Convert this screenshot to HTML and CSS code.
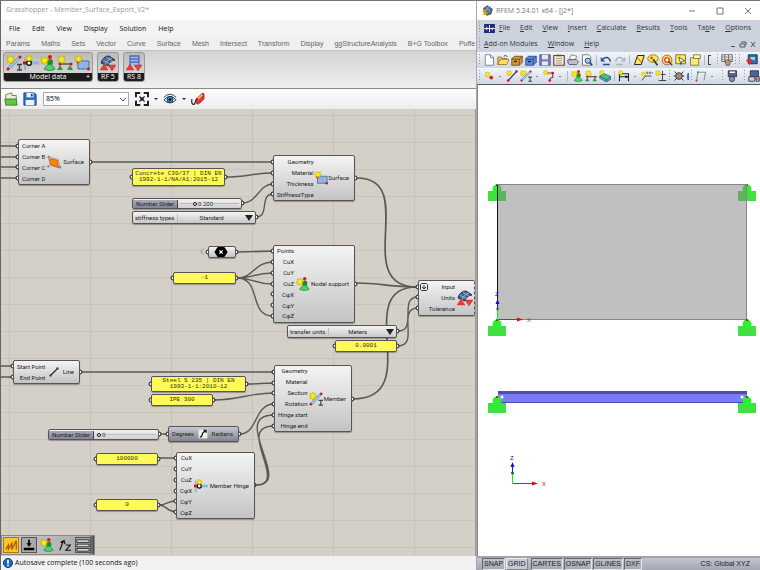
FILE: index.html
```
<!DOCTYPE html>
<html lang="en">
<head>
    <meta charset="UTF-8">
    <meta name="viewport" content="width=device-width, initial-scale=1.0">
    <title>Grasshopper - Member_Surface_Export_V2*</title>
    <link rel="stylesheet" href="styles.css">
</head>
<body>
    <!-- Shared icons -->
    <svg class="sprite" aria-hidden="true">
        <symbol id="star" viewBox="0 0 8 8"><path d="M4 0l.9 2L7 1 6 3.200 8 4 6 4.900 7 7 4.900 6 4 8 3.100 6 1 7 2 4.900 0 4 2 3.200 1 1 3.100 2z" fill="#ffee00" stroke="#b09500" stroke-width=".4"/></symbol>
        <symbol id="i-member" viewBox="0 0 16 16"><path d="M2 14L14 2" stroke="#6f9fd8" stroke-width="3"/><path d="M2 14L14 2" stroke="#d5e6f8" stroke-width="1"/><circle cx="2" cy="14" r="1.500" fill="#d11"/><circle cx="14" cy="2" r="1.500" fill="#d11"/><path d="M11 9.500h5M11 15h5M13.500 9.500V15" stroke="#444" stroke-width="1.400"/><use href="#star" width="9" height="9"/></symbol>
        <symbol id="i-hinge" viewBox="0 0 16 16"><path d="M1 8h15" stroke="#8fb5e6" stroke-width="3"/><path d="M2 2v13" stroke="#8fb5e6" stroke-width="2"/><circle cx="6" cy="8" r="2.300" fill="#fff" stroke="#111" stroke-width="1.400"/><rect y="6.500" width="3" height="3" fill="#e00"/><use href="#star" x="2" width="8" height="7"/></symbol>
        <symbol id="i-support" viewBox="0 0 16 16"><path d="M10 7l5 7-5 2-6-2z" fill="#4fd06a" stroke="#14742a" stroke-width=".7"/><circle cx="10" cy="7" r="3" fill="#1d8c35"/><circle cx="10" cy="2" r="2" fill="#e01818"/><use href="#star" y="1" width="9" height="9"/></symbol>
        <symbol id="i-line-support" viewBox="0 0 16 16"><path d="M2 9h13" stroke="#222" stroke-width="1.200"/><path d="M3 10l3 5H0zM13 10l3 5h-6z" fill="#2a9a40"/><circle cx="3" cy="9" r="1.500" fill="#d11"/><circle cx="14" cy="9" r="1.500" fill="#d11"/><use href="#star" width="9" height="9"/></symbol>
        <symbol id="i-surface" viewBox="0 0 16 16"><path d="M4 6h11v8H4z" fill="#8fb6e8" stroke="#4f6f9f"/><circle cx="4" cy="7" r="1.400" fill="#d11"/><circle cx="14.500" cy="14" r="1.500" fill="#d11"/><use href="#star" width="9" height="8"/></symbol>
        <symbol id="i-rf" viewBox="0 0 16 16"><path d="M1 8Q3 1 9 1l6 4Q10 5 8 11z" fill="#46678f" stroke="#1e3048"/><path d="M3 5l7 4M6 2l6 4M5 10Q6 5 12 3" stroke="#b6cbe6" stroke-width=".7" fill="none"/><path d="M0 15l4-6 4 6zM8 10h8l-4 6z" fill="#ee3a3a" stroke="#b22" stroke-width=".4"/></symbol>
        <symbol id="i-rs" viewBox="0 0 16 16"><path d="M4 10V1h9v9M4 4h9M4 7h9" fill="#a4bcea" stroke="#4c6cb4" stroke-width="1.300"/><path d="M0 15l4-6 4 6zM8 10h8l-4 6z" fill="#ee3a3a" stroke="#b22" stroke-width=".4"/></symbol>
        <symbol id="i-orange" viewBox="0 0 16 16"><path d="M1 2l12 3 2 10-11-3z" fill="none" stroke="#777" stroke-width=".6"/><path d="M3 4l9 2 1 8-9-3z" fill="#f80" stroke="#b84a00" stroke-width=".8"/><circle cx="2" cy="2" r="1.200" fill="#777"/><circle cx="1.500" cy="13" r="1.200" fill="#777"/><circle cx="15" cy="14" r="1.200" fill="#777"/></symbol>
        <symbol id="i-line" viewBox="0 0 16 16"><path d="M4 12L12 4" stroke="#222" stroke-width="1.300"/><circle cx="4" cy="12" r="1.500" fill="#555"/><circle cx="12" cy="4" r="1.500" fill="#555"/></symbol>
        <symbol id="i-folder" viewBox="0 0 16 16"><path d="M2 14V3l7-2v3h5v10z" fill="#e9f3df" stroke="#4d8c2b"/><path d="M1 8h13l1 7H2z" fill="#6cc043" stroke="#3c8420"/></symbol>
        <symbol id="i-save" viewBox="0 0 16 16"><path d="M1 1h12l2 2v12H1z" fill="#2f6fcd" stroke="#173f86"/><path d="M4 1h8v5H4zM3 9h10v6H3z" fill="#eef4fc"/><path d="M9 2h2v3H9z" fill="#173f86"/></symbol>
        <symbol id="i-new" viewBox="0 0 16 16"><path d="M3 1h7l4 4v10H3z" fill="#fff" stroke="#667"/><path d="M10 1v4h4" fill="none" stroke="#667"/></symbol>
        <symbol id="i-open" viewBox="0 0 16 16"><path d="M1 14V4h5l1 2h6v2" fill="#f0c650" stroke="#8c6a14"/><path d="M1 14l3-7h12l-3 7z" fill="#ffdd70" stroke="#8c6a14"/><path d="M9 3q3-3 5 1" fill="none" stroke="#246" stroke-width="1.300"/></symbol>
        <symbol id="i-box" viewBox="0 0 16 16"><path d="M1 6l4-3h10v8l-4 4H1z" fill="#d39a3a" stroke="#5e3d0b"/><path d="M1 7h10v8M11 7l4-4" fill="none" stroke="#5e3d0b"/><rect x="4" y="9" width="4" height="2" fill="#402800"/></symbol>
        <symbol id="i-bluebox" viewBox="0 0 16 16"><path d="M1 6l4-3h10v8l-4 4H1z" fill="#5a8be0" stroke="#1b356e"/><path d="M1 7h10v8M11 7l4-4" fill="none" stroke="#1b356e"/><rect x="4" y="9" width="4" height="2" fill="#10204a"/></symbol>
        <symbol id="i-disk" viewBox="0 0 16 16"><path d="M1 1h14v14H1z" fill="#7c7fb8" stroke="#4c4e80"/><path d="M4 1h8v6H4zM4 10h8v5H4z" fill="#e9e9f4"/></symbol>
        <symbol id="i-clip" viewBox="0 0 16 16"><path d="M1 2h14v13H1z" fill="#f3e8d4" stroke="#5a4b3b" stroke-width="1.500"/><path d="M4 6h8M4 9h8M4 12h8" stroke="#887"/><path d="M4 1h8v2H4z" fill="#5a4b3b"/></symbol>
        <symbol id="i-print" viewBox="0 0 16 16"><path d="M3 7l3-6 7 2-2 5z" fill="#fff" stroke="#567"/><path d="M1 8l11-1 3 3-2 4H3l-2-3z" fill="#b9bed0" stroke="#445"/><circle cx="12" cy="12" r="1.200" fill="#f6cf2c"/></symbol>
        <symbol id="i-preview" viewBox="0 0 16 16"><path d="M2 1h8l3 3v11H2z" fill="#fff" stroke="#556"/><circle cx="9" cy="9" r="3.500" fill="#a9cdf2" stroke="#246" stroke-width="1.300"/><path d="M11.500 11.500L15 15" stroke="#246" stroke-width="2"/></symbol>
        <symbol id="i-undo" viewBox="0 0 16 16"><path d="M3 7q8-6 11 3M4 14h9" fill="none" stroke="currentColor" stroke-width="2"/><path d="M1 4v6h6z" fill="currentColor"/></symbol>
        <symbol id="i-plane" viewBox="0 0 16 16"><path d="M6 2h9l-4 12H2z" fill="#ffe95c" stroke="#222" stroke-width="1.300"/><path d="M5 4l7 8" stroke="#d11"/></symbol>
        <symbol id="i-palette" viewBox="0 0 16 16"><ellipse cx="8" cy="6" rx="7" ry="5" fill="#ffe34d" stroke="#8a7000"/><circle cx="6" cy="5" r="1.500" fill="#d11"/><path d="M8 7l6 8" stroke="#333" stroke-width="2"/></symbol>
        <symbol id="i-target" viewBox="0 0 16 16"><circle cx="8" cy="8" r="6.500" fill="#ffdf3c" stroke="#a33"/><circle cx="8" cy="8" r="3" fill="#fff" stroke="#c22" stroke-width="1.500"/><path d="M10 10l5 5" stroke="#333" stroke-width="1.500"/></symbol>
        <symbol id="i-select" viewBox="0 0 16 16"><path d="M1 1h13v12H1z" fill="#ffe95c" stroke="#665500"/><path d="M5 4l8 5-4 1-1 4z" fill="#fff" stroke="#333"/></symbol>
        <symbol id="i-sheet" viewBox="0 0 16 16"><path d="M2 5h11v10H2z" fill="#f8e685" stroke="#776410"/><path d="M6 1h9v5H6z" fill="#fff7b8" stroke="#776410"/></symbol>
        <symbol id="i-table" viewBox="0 0 16 16"><path d="M1 1h14v9H1z" fill="#fff" stroke="#444"/><path d="M1 4h14M1 7h14M5 1v9M10 1v9" stroke="#555"/><path d="M5 9h8l-2 6H7z" fill="#c89a78" stroke="#543"/></symbol>
        <symbol id="i-cut" viewBox="0 0 16 16"><path d="M3 1h12v12H3z" fill="#2d6fa8" stroke="#123"/><path d="M6 4h6v4H6z" fill="#9cd2f4"/><path d="M0 8l3-1 2 1 2-1 2 1-4 7z" fill="#e02424"/></symbol>
        <symbol id="i-node" viewBox="0 0 16 16"><use href="#star" x="2" y="2" width="8" height="8"/><circle cx="11" cy="10" r="2.500" fill="#d82020"/></symbol>
        <symbol id="i-rline" viewBox="0 0 16 16"><path d="M3 14L14 2" stroke="#335" stroke-width="1.500"/><circle cx="3" cy="14" r="1.800" fill="#d11"/><circle cx="14" cy="2" r="1.800" fill="#d11"/><use href="#star" width="8" height="8"/></symbol>
        <symbol id="i-poly" viewBox="0 0 16 16"><path d="M3 4h10v6q-4 0-4 5" stroke="#933" fill="none" stroke-width="1.500"/><circle cx="13" cy="4" r="1.800" fill="#d11"/><circle cx="9" cy="14" r="1.800" fill="#d11"/><use href="#star" width="7" height="7"/></symbol>
        <symbol id="i-solid" viewBox="0 0 16 16"><path d="M1 8l6-3 9 4-6 4z" fill="#58c070" stroke="#176"/><path d="M1 8v3l9 5v-3zM10 13l6-4v3l-6 4z" fill="#59a5d8" stroke="#176"/><use href="#star" width="7" height="7"/></symbol>
        <symbol id="i-dim" viewBox="0 0 16 16"><path d="M2 15V5h12v10M2 9h12" fill="none" stroke="#222" stroke-width="1.500"/><path d="M14 9l-4-2v4z"/><use href="#star" width="7" height="7"/></symbol>
        <symbol id="i-text" viewBox="0 0 16 16"><path d="M1 14l5-6h8" fill="none" stroke="#444" stroke-width="1.300"/><path d="M8 4h2M11 4h2M14 4h2M8 2v3M12 2v3" stroke="#234"/><use href="#star" y="2" width="7" height="7"/></symbol>
        <symbol id="i-level" viewBox="0 0 16 16"><path d="M10 1v14M5 14h10M8 6h6" fill="none" stroke="#444" stroke-width="1.300"/><use href="#star" width="8" height="8"/></symbol>
        <symbol id="i-bug" viewBox="0 0 16 16"><path d="M2 2l12 12M14 2L2 14M1 8h14" stroke="#333" stroke-width="1.300"/><circle cx="8" cy="8" r="4.500" fill="#9b8a7a" stroke="#322"/></symbol>
        <symbol id="i-frame" viewBox="0 0 16 16"><path d="M2 14L4 3h10l-2 11" fill="none" stroke="#8a9a8f" stroke-width="1.500"/><circle cx="2" cy="14" r="1.500" fill="#c44"/><circle cx="4" cy="3" r="1.500" fill="#3a5"/></symbol>
        <symbol id="i-calc" viewBox="0 0 16 16"><path d="M3 1h11v8H3z" fill="#50639e" stroke="#223"/><path d="M5 3h7" stroke="#fff" stroke-width="2"/><circle cx="8" cy="12" r="3.500" fill="#8b8f9e" stroke="#334"/></symbol>
        <symbol id="i-calc2" viewBox="0 0 16 16"><path d="M3 1h11v8H3z" fill="#50639e" stroke="#223"/><path d="M1 9h8v6H1zM11 9h4v6h-4z" fill="#c7cede" stroke="#223"/><path d="M9 12h6" stroke="#d11"/></symbol>
        <symbol id="g-support" viewBox="0 0 18 17"><path d="M0 7h18v10H0z" fill="#40e040"/><circle cx="9" cy="5" r="4.500" fill="#2cf22c"/><circle cx="9" cy="1" r="1" fill="#8a1010"/></symbol>
    </svg>

    <div class="desktop">
        <main class="gh window">
            <header class="gh-title">Grasshopper - Member_Surface_Export_V2*</header>
            <nav class="gh-menu">
                <button>File</button><button>Edit</button><button>View</button><button>Display</button><button>Solution</button><button>Help</button>
            </nav>
            <nav class="gh-tabs">
                <button>Params</button><button>Maths</button><button>Sets</button><button>Vector</button><button>Curve</button><button>Surface</button><button>Mesh</button><button>Intersect</button><button>Transform</button><button>Display</button><button>ggStructureAnalysis</button><button>B+G Toolbox</button><button>Puffe</button>
            </nav>
            <section class="ribbon">
                <div class="group">
                    <div class="group-icons">
                        <button aria-label="Member"><svg><use href="#i-member"/></svg></button>
                        <button aria-label="Member hinge"><svg><use href="#i-hinge"/></svg></button>
                        <button aria-label="Nodal support"><svg><use href="#i-support"/></svg></button>
                        <button aria-label="Line support"><svg><use href="#i-line-support"/></svg></button>
                        <button aria-label="Surface"><svg><use href="#i-surface"/></svg></button>
                    </div>
                    <div class="group-label"><span>Model data</span><i>+</i></div>
                </div>
                <div class="group">
                    <div class="group-icons"><button aria-label="RFEM 5"><svg><use href="#i-rf"/></svg></button></div>
                    <div class="group-label"><span>RF 5</span></div>
                </div>
                <div class="group">
                    <div class="group-icons"><button aria-label="RSTAB 8"><svg><use href="#i-rs"/></svg></button></div>
                    <div class="group-label"><span>RS 8</span></div>
                </div>
            </section>
            <section class="gh-tools">
                <button aria-label="Open"><svg><use href="#i-folder"/></svg></button>
                <button aria-label="Save"><svg><use href="#i-save"/></svg></button>
                <select class="zoom" aria-label="Zoom"><option>85%</option></select>
                <button aria-label="Zoom extents"><svg viewBox="0 0 16 16"><path d="M1 6V1h5M10 1h5v5M15 10v5h-5M6 15H1v-5" fill="none" stroke="#222" stroke-width="2.500"/><path d="M5 5l6 6M11 5l-6 6" stroke="#222" stroke-width="1.500"/><circle cx="8" cy="8" r="2" fill="#222"/></svg></button>
                <i class="drop"></i>
                <button aria-label="Preview"><svg viewBox="0 0 16 16"><path d="M1 9Q8 1 15 9Q8 16 1 9z" fill="#eaf6ff" stroke="#223344"/><circle cx="8" cy="8.500" r="3.500" fill="#2d9fe0" stroke="#124"/><circle cx="8" cy="8.500" r="1.500"/><path d="M1 6Q8-1 15 6" fill="none" stroke="#234"/></svg></button>
                <i class="drop"></i>
                <button aria-label="Sketch"><svg viewBox="0 0 16 16"><path d="M5 12q1-5 8-11l2 1v6q-4 5-8 6z" fill="#e33a2c" stroke="#801010" stroke-width=".6"/><path d="M8 8l5-5" stroke="#ffb080" stroke-width="2"/><path d="M1 8q-1 7 3 6 1-5 3-7" fill="none" stroke="#222" stroke-width="1.300"/></svg></button>
            </section>

            <section class="canvas">
                <svg class="wires" aria-hidden="true">
                    <g transform="translate(0 -109)">
                        <g class="wire">
                            <path d="M0 146H18M0 157H18M0 167H18M0 178H18M0 366H13M0 377H13"/>
                            <path d="M226 177C246 177 254 173 273 173"/>
                            <path d="M243 203C257 203 259 184 273 184"/>
                            <path d="M256 217C270 217 259 194 273 194"/>
                            <path d="M357 178C420 178 350 287 417 287" class="thick"/>
                            <path d="M238 252L273 251" class="thick"/>
                            <path d="M237 278C254 278 254 262 273 262M237 278C254 278 254 273 273 273M237 278C254 278 254 284 273 284M237 278C262 278 248 316 273 316"/>
                            <path d="M357 283C380 283 390 287 417 287" class="thick"/>
                            <path d="M398 331C418 331 398 297 418 297M398 346C420 346 396 308 418 308"/>
                            <path d="M353 399C426 399 350 287 417 287" class="thick"/>
                            <path d="M91 162H273M81 372H274" class="thick"/>
                            <path d="M247 384C258 384 263 383 274 383M214 400C240 400 248 393 274 393M161 434H168"/>
                            <path d="M240 434C258 434 254 404 274 404"/>
                            <path d="M256 485C295 485 228 415 274 415M256 485C290 485 234 426 274 426"/>
                            <path d="M159 458H176M159 505C166 505 168 501 176 501M159 505C166 505 168 512 176 512"/>
                        </g>
                        <path class="wireless" d="M202 249q-3 2.500 0 5M204 248q-4 3.500 0 7"/>
                        <g class="ports">
                            <circle cx="18" cy="146" r="2"/><circle cx="18" cy="157" r="2"/><circle cx="18" cy="167" r="2"/><circle cx="18" cy="178" r="2"/><circle cx="90" cy="162" r="2"/>
                            <circle cx="132" cy="177" r="2"/><circle cx="225" cy="177" r="2"/><circle cx="242" cy="203" r="2"/><circle cx="256" cy="217" r="2"/>
                            <circle cx="273" cy="162" r="2"/><circle cx="273" cy="173" r="2"/><circle cx="273" cy="184" r="2"/><circle cx="273" cy="194" r="2"/><circle cx="355" cy="178" r="2"/>
                            <circle cx="208" cy="252" r="2"/><circle cx="236" cy="252" r="2"/><circle cx="173" cy="278" r="2"/><circle cx="236" cy="278" r="2"/>
                            <circle cx="273" cy="251" r="2"/><circle cx="273" cy="262" r="2"/><circle cx="273" cy="273" r="2"/><circle cx="273" cy="284" r="2"/><circle cx="273" cy="294" r="2"/><circle cx="273" cy="305" r="2"/><circle cx="273" cy="316" r="2"/><circle cx="355" cy="284" r="2"/>
                            <circle cx="418" cy="287" r="2"/><circle cx="418" cy="297" r="2"/><circle cx="418" cy="308" r="2"/>
                            <circle cx="397" cy="331" r="2"/><circle cx="335" cy="346" r="2"/><circle cx="397" cy="346" r="2"/>
                            <circle cx="13" cy="366" r="2"/><circle cx="13" cy="377" r="2"/><circle cx="80" cy="372" r="2"/>
                            <circle cx="151" cy="384" r="2"/><circle cx="246" cy="384" r="2"/><circle cx="151" cy="400" r="2"/><circle cx="213" cy="400" r="2"/>
                            <circle cx="274" cy="372" r="2"/><circle cx="274" cy="383" r="2"/><circle cx="274" cy="393" r="2"/><circle cx="274" cy="404" r="2"/><circle cx="274" cy="415" r="2"/><circle cx="274" cy="426" r="2"/><circle cx="352" cy="399" r="2"/>
                            <circle cx="159" cy="434" r="2"/><circle cx="168" cy="434" r="2"/><circle cx="239" cy="434" r="2"/>
                            <circle cx="96" cy="459" r="2"/><circle cx="158" cy="459" r="2"/><circle cx="96" cy="505" r="2"/><circle cx="158" cy="505" r="2"/>
                            <circle cx="176" cy="458" r="2"/><circle cx="176" cy="469" r="2"/><circle cx="176" cy="480" r="2"/><circle cx="176" cy="491" r="2"/><circle cx="176" cy="501" r="2"/><circle cx="176" cy="512" r="2"/><circle cx="254" cy="485" r="2"/>
                        </g>
                    </g>
                </svg>

                <div class="node n-corners"><ul><li>Corner A</li><li>Corner B</li><li>Corner C</li><li>Corner D</li></ul><svg><use href="#i-orange"/></svg><b>Surface</b></div>
                <div class="panel p-concrete">Concrete C30/37 | DIN EN 1992-1-1/NA/A1:2015-12</div>
                <div class="slider s-thickness"><label for="thickness">Number Slider</label><div class="track"><input id="thickness" type="range" min="0" max="100" value="23"><output>0.200</output></div></div>
                <div class="list l-stiffness"><label for="stiffness">stiffness types</label><select id="stiffness"><option>Standard</option></select></div>
                <div class="node n-surface"><ul><li>Geometry</li><li>Material</li><li>Thickness</li><li>StiffnessType</li></ul><svg><use href="#i-surface"/></svg><b>Surface</b></div>
                <div class="node n-point"><svg viewBox="0 0 16 12"><path d="M4 0h8l4 6-4 6H4L0 6z"/><path d="M6 4l4 4M10 4L6 8" stroke="#fff" stroke-width="1.500"/></svg></div>
                <div class="node n-nodal"><ul><li>Points</li><li>CuX</li><li>CuY</li><li>CuZ</li><li>CφX</li><li>CφY</li><li>CφZ</li></ul><svg><use href="#i-support"/></svg><b>Nodal support</b></div>
                <div class="panel p-minus">-1</div>
                <div class="node n-export"><svg class="flatten" viewBox="0 0 8 8"><path d="M1.500.5h5l1 1v5l-1 1h-5l-1-1v-5zM4 2v4M2 4l2 2 2-2" fill="none" stroke="#333"/></svg><ul><li>Input</li><li>Units</li><li>Tolerance</li></ul><svg><use href="#i-rf"/></svg></div>
                <div class="list l-units"><label for="units">transfer units</label><select id="units"><option>Meters</option></select></div>
                <div class="panel p-tolerance">0.0001</div>
                <div class="node n-line"><ul><li>Start Point</li><li>End Point</li></ul><svg><use href="#i-line"/></svg><b>Line</b></div>
                <div class="panel p-steel">Steel S 235 | DIN EN 1993-1-1:2010-12</div>
                <div class="panel p-ipe">IPE 300</div>
                <div class="node n-member"><ul><li>Geometry</li><li>Material</li><li>Section</li><li>Rotation</li><li>Hinge start</li><li>Hinge end</li></ul><svg><use href="#i-member"/></svg><b>Member</b></div>
                <div class="slider s-angle"><label for="angle">Number Slider</label><div class="track"><input id="angle" type="range" min="0" max="100" value="2"><output>0</output></div></div>
                <div class="node n-radians"><b>Degrees</b><svg viewBox="0 0 16 16"><path d="M1 1h14v14H1z" fill="#eee"/><path d="M3 13c5 0 3-6 5-7s2-2 4-3M9 2h4v4" fill="none" stroke="#111" stroke-width="2"/></svg><b>Radians</b></div>
                <div class="panel p-hundred">100000</div>
                <div class="panel p-zero">0</div>
                <div class="node n-hinge"><ul><li>CuX</li><li>CuY</li><li>CuZ</li><li>CφX</li><li>CφY</li><li>CφZ</li></ul><svg><use href="#i-hinge"/></svg><b>Member Hinge</b></div>

                <div class="widgets">
                    <button class="active" aria-label="Profiler"><svg viewBox="0 0 16 16"><path d="M2 13l3-5v5l4-7v7l5-10v10" fill="none" stroke="#b05a00" stroke-width="1.500"/></svg></button>
                    <button class="pressed" aria-label="Align"><svg viewBox="0 0 16 16"><path d="M2 11h12v3H2zM5 6h6l-3 4zM7 2h2v5H7z"/></svg></button>
                    <button aria-label="Support"><svg><use href="#i-support"/></svg></button>
                    <button aria-label="Sort"><svg viewBox="0 0 16 16"><path d="M2 14L6 4M3 5l4-2 1 4M9 8h5l-5 6h6" fill="none" stroke="#111" stroke-width="1.300"/></svg></button>
                    <button class="pressed" aria-label="Rows"><svg viewBox="0 0 16 16"><path d="M1 2h14v3H1zM1 7h14v3H1zM1 12h14v3H1z" fill="#ddd" stroke="#222"/></svg></button>
                </div>
            </section>
            <footer class="gh-status"><svg viewBox="0 0 12 12"><circle cx="6" cy="6" r="5.500" fill="#1a62c4" stroke="#0c2f6c"/><path d="M6 2v5M6 8v2" stroke="#fff" stroke-width="2"/></svg>Autosave complete (100 seconds ago)</footer>
        </main>

        <aside class="rf window">
            <header class="rf-title">
                <svg class="app" viewBox="0 0 16 16"><path d="M2 5l6-4 7 5-2 7-6 2z" fill="#5374a4" stroke="#223"/><path d="M6 3l6 6M10 2L5 10" stroke="#abc"/><path d="M6 8q-4-1-4 1t4 2-4 3" stroke="#caa30c" stroke-width="2" fill="none"/></svg>
                <span>RFEM 5.24.01 x64 - [j2*]</span>
                <button aria-label="Minimize"><svg viewBox="0 0 8 8"><path d="M1 4h6"/></svg></button>
                <button aria-label="Maximize"><svg viewBox="0 0 8 8"><path d="M1 1h6v6H1z"/></svg></button>
                <button aria-label="Close"><svg viewBox="0 0 8 8"><path d="M1 1l6 6M7 1L1 7"/></svg></button>
            </header>
            <nav class="rf-menu">
                <div class="menu-row">
                    <i class="grip"></i>
                    <svg class="logo" viewBox="0 0 12 10"><path d="M0 0h12v10H0z" fill="#1c2c78"/><path d="M0 5h12M6 1v8M3 3v4M9 4v3" stroke="#fff"/></svg>
                    <button><u>F</u>ile</button><button><u>E</u>dit</button><button><u>V</u>iew</button><button><u>I</u>nsert</button><button><u>C</u>alculate</button><button><u>R</u>esults</button><button><u>T</u>ools</button><button>Ta<u>b</u>le</button><button><u>O</u>ptions</button>
                </div>
                <div class="menu-row">
                    <i class="grip"></i>
                    <button><u>A</u>dd-on Modules</button><button><u>W</u>indow</button><button><u>H</u>elp</button>
                    <svg class="mdi" viewBox="0 0 28 8"><path d="M1 6.500h4M10 4h5v3h-5zM11 2h5v3M21 2l4 5M25 2l-4 5" fill="none" stroke="#555"/></svg>
                </div>
            </nav>
            <div class="rf-tools">
                <i class="grip"></i>
                <button aria-label="New"><svg><use href="#i-new"/></svg></button>
                <button aria-label="Open"><svg><use href="#i-open"/></svg></button>
                <button aria-label="Project"><svg><use href="#i-box"/></svg></button>
                <button aria-label="Block"><svg><use href="#i-bluebox"/></svg></button>
                <button aria-label="Save"><svg><use href="#i-disk"/></svg></button>
                <button aria-label="Clipboard"><svg><use href="#i-clip"/></svg></button>
                <button aria-label="Print"><svg><use href="#i-print"/></svg></button>
                <button aria-label="Preview"><svg><use href="#i-preview"/></svg></button>
                <i class="rule"></i>
                <button class="undo" aria-label="Undo"><svg><use href="#i-undo"/></svg></button>
                <button class="redo" aria-label="Redo"><svg><use href="#i-undo"/></svg></button>
                <i class="rule"></i>
                <button aria-label="Work plane"><svg><use href="#i-plane"/></svg></button>
                <button aria-label="Colors"><svg><use href="#i-palette"/></svg></button>
                <button aria-label="Target"><svg><use href="#i-target"/></svg></button>
                <button aria-label="Select"><svg><use href="#i-select"/></svg></button>
                <button aria-label="Sheets"><svg><use href="#i-sheet"/></svg></button>
                <i class="rule"></i>
                <i class="cut"></i>
                <i class="grip start"></i>
                <button aria-label="Tables"><svg><use href="#i-table"/></svg></button>
                <i class="grip"></i>
                <i class="grip"></i>
                <button class="push" aria-label="Sections"><svg><use href="#i-cut"/></svg></button>
            </div>
            <div class="rf-tools">
                <i class="grip"></i>
                <button aria-label="Node"><svg><use href="#i-node"/></svg></button>
                <i class="drop"></i>
                <button aria-label="Line"><svg><use href="#i-rline"/></svg></button>
                <button aria-label="Member"><svg><use href="#i-member"/></svg></button>
                <i class="drop"></i>
                <button aria-label="Polyline"><svg><use href="#i-poly"/></svg></button>
                <i class="drop"></i>
                <i class="rule"></i>
                <button aria-label="Nodal support"><svg><use href="#i-support"/></svg></button>
                <button aria-label="Line support"><svg><use href="#i-line-support"/></svg></button>
                <button aria-label="Solid"><svg><use href="#i-solid"/></svg></button>
                <i class="rule"></i>
                <button aria-label="Dimension"><svg><use href="#i-dim"/></svg></button>
                <i class="drop"></i>
                <button aria-label="Comment"><svg><use href="#i-text"/></svg></button>
                <button aria-label="Level"><svg><use href="#i-level"/></svg></button>
                <i class="grip"></i>
                <button aria-label="Check"><svg><use href="#i-bug"/></svg></button>
                <i class="arc"></i>
                <i class="grip"></i>
                <button aria-label="Frame"><svg><use href="#i-frame"/></svg></button>
                <i class="drop"></i>
                <i class="grip start"></i>
                <button aria-label="Calculate"><svg><use href="#i-calc"/></svg></button>
                <i class="grip start"></i>
                <button class="push" aria-label="Results"><svg><use href="#i-calc2"/></svg></button>
            </div>
            <section class="view">
                <svg role="img" aria-label="Model with a surface and a member">
                    <g transform="translate(-478 -85)">
                        <use href="#g-support" x="488" y="184" width="18" height="17"/>
                        <use href="#g-support" x="738" y="184" width="18" height="17"/>
                        <path d="M497 185H747V320H497z" fill="#828282" fill-opacity=".5"/>
                        <path d="M497 184.500H747M746.500 185V320M497 319.500H747" stroke="#858585" fill="none"/>
                        <use href="#g-support" x="488" y="319" width="18" height="17"/>
                        <use href="#g-support" x="738" y="319" width="18" height="17"/>
                        <path d="M497.500 185V320" stroke="#111"/>
                        <path d="M498 391H747V403H498z" fill="#7b7bf6"/>
                        <path d="M498 391H747V394H498zM498 402H747V403H498z" fill="#4c4cb4"/>
                        <use href="#g-support" x="488" y="396" width="18" height="17"/>
                        <use href="#g-support" x="738" y="396" width="18" height="17"/>
                        <circle cx="502" cy="397" r="1.500" fill="#fff"/><circle cx="742" cy="397" r="1.500" fill="#fff"/>
                        <path d="M497.500 320V308M512.500 484V473" stroke="#1cf01c"/>
                        <path d="M497.500 309V298M512.500 473V464" stroke="#11f"/>
                        <path d="M497.500 299l2 5h-4zM512.500 462l2 5h-4z" fill="#1212b8"/>
                        <circle cx="512.500" cy="473" r="1.500" fill="#0a6a30"/><circle cx="497.500" cy="309" r="1.200" fill="#0a6a30"/>
                        <path d="M498 319.500H520M513 483.500H535" stroke="#f01010"/>
                        <path d="M523 319.500l-6-2v4zM538 483.500l-6-2v4z" fill="#d01010"/>
                        <text x="495" y="296" class="axis-z">Z</text><text x="527" y="322" class="axis-x">X</text>
                        <text x="510" y="460" class="axis-z">Z</text><text x="542" y="486" class="axis-x">X</text>
                    </g>
                </svg>
            </section>
            <footer class="rf-status">
                <button>SNAP</button><button class="on">GRID</button><button>CARTES</button><button>OSNAP</button><button>GLINES</button><button>DXF</button>
                <span>CS: Global XYZ</span>
            </footer>
        </aside>
    </div>
</body>
</html>
```
FILE: styles.css
```
* { margin: 0; padding: 0; box-sizing: border-box; }
body {
    font-family: "Open Sans", sans-serif;
    font-size: 7px;
    line-height: 10px;
    color: #222;
    background: #d4d0c8;
}
button {
    font: inherit;
    color: inherit;
    background: none;
    border: 0;
    white-space: nowrap;
}
svg { display: block; flex: none; }
.sprite { position: absolute; width: 0; height: 0; }
.desktop {
    display: grid;
    grid-template-columns: 476fr 284fr;
    height: 100vh;
    border-top: 1px solid #777;
}
.window {
    display: flex;
    flex-direction: column;
    min-width: 0;
    overflow: hidden;
}

/* Grasshopper */
.gh { position: relative; }
.gh::before {
    content: "";
    position: absolute;
    z-index: 2;
    inset: 0 auto 0 0;
    width: 1px;
    background: #666;
}
.gh-title {
    height: 19px;
    padding: 4px 6px;
    background: #fff;
    color: #999;
}
.gh-menu {
    display: flex;
    align-items: center;
    gap: 12px;
    height: 17px;
    padding: 0 9px;
    background: #f3f3f3;
    color: #111;
}
.gh-tabs {
    display: flex;
    align-items: center;
    gap: 11px;
    height: 14px;
    padding: 0 0 0 6px;
    overflow: hidden;
    background: #efefef;
    border-bottom: 1px solid #c4c4c4;
    color: #666;
    font-family: "Liberation Sans", sans-serif;
}
.ribbon {
    display: flex;
    align-items: flex-start;
    gap: 4px;
    height: 38px;
    padding: 1px 3px;
    background: linear-gradient(#d2d2d2, #f0f0f0);
    border-bottom: 1px solid #888;
}
.group {
    border: 1px solid #999;
    border-radius: 3px;
    background: linear-gradient(#bbb, #dcdcdc);
    overflow: hidden;
}
.group-icons { display: flex; gap: 1px; padding: 2px; }
.group-icons svg { width: 16px; height: 16px; }
.group-label {
    display: flex;
    justify-content: center;
    position: relative;
    line-height: 8px;
    background: #1c1c1c;
    color: #fff;
}
.group-label i {
    position: absolute;
    right: 2px;
    font-style: normal;
}
.gh-tools {
    display: flex;
    align-items: center;
    gap: 5px;
    height: 20px;
    padding: 0 4px;
    background: linear-gradient(#fdfdfd, #ededed);
}
.gh-tools svg { width: 14px; height: 14px; }
.zoom {
    width: 86px;
    height: 14px;
    padding: 0 2px;
    margin: 0 1px;
    appearance: none;
    border: 1px solid #aaa;
    font: inherit;
    background:
        linear-gradient(45deg, transparent 45%, #555 45%, #555 60%, transparent 60%) right 5px center / 3px 3px no-repeat,
        linear-gradient(-45deg, transparent 45%, #555 45%, #555 60%, transparent 60%) right 2px center / 3px 3px no-repeat,
        #fff;
}
.drop {
    flex: none;
    border: 2px solid transparent;
    border-top-color: #222;
    border-bottom: 0;
}

/* Canvas */
.canvas {
    position: relative;
    flex: 1;
    overflow: hidden;
    background:
        linear-gradient(to right, #c6c3ba 1px, transparent 1px) 9px 6px / 81px 27px,
        linear-gradient(#c8c5bc 1px, transparent 1px) 9px 6px / 81px 27px,
        #d4d0c8;
    border-right: 1px solid #999;
    font-family: Roboto, sans-serif;
    font-size: 6px;
    line-height: 8px;
}
.wires {
    position: absolute;
    inset: 0;
    width: 100%;
    height: 100%;
}
.wire { fill: none; stroke: #5a5a54; stroke-width: 1.4; }
.wire .thick { stroke-width: 1.7; }
.wireless { fill: none; stroke: #aaa; }
.ports { fill: #fff; stroke: #111; }
.node, .panel, .slider, .list {
    position: absolute;
    display: flex;
    align-items: center;
    border: 1px solid #555;
    border-radius: 2px;
    box-shadow: 0 1px 1px rgba(0,0,0,0.3);
    white-space: nowrap;
}
.node {
    justify-content: space-between;
    padding: 0 5px 0 3px;
    background: linear-gradient(#f4f4f4, #c4c4c4);
}
.node ul {
    display: flex;
    flex-direction: column;
    justify-content: space-around;
    height: 100%;
    list-style: none;
    text-align: right;
}
.node b { font-weight: normal; }
.node svg { width: 14px; height: 14px; }
.n-corners { left: 18px; top: 30px; width: 72px; height: 46px; }
.n-surface { left: 273px; top: 46px; width: 82px; height: 46px; }
.n-point { left: 208px; top: 137px; width: 28px; height: 12px; justify-content: center; }
.n-point svg { height: 10px; }
.n-nodal { left: 273px; top: 136px; width: 82px; height: 78px; }
.n-export { left: 418px; top: 171px; width: 57px; height: 36px; padding: 0 1px; border-right: 1px dashed #555; }
.n-export ul { flex: 1; padding-right: 2px; }
.n-export svg { width: 16px; height: 16px; }
.n-export .flatten { align-self: flex-start; width: 8px; height: 8px; margin-top: 2px; }
.n-line { left: 13px; top: 251px; width: 67px; height: 24px; }
.n-member { left: 274px; top: 256px; width: 78px; height: 67px; }
.n-radians { left: 168px; top: 317px; width: 71px; height: 16px; background: linear-gradient(#c8c8d2, #84848f); }
.n-radians svg { width: 10px; height: 10px; }
.n-hinge { left: 176px; top: 343px; width: 79px; height: 67px; }
.panel {
    justify-content: center;
    background: #fffa5a;
    color: #333300;
    font-family: "Liberation Mono", monospace;
    line-height: 6px;
    text-align: center;
    white-space: normal;
}
.p-concrete { left: 132px; top: 59px; width: 93px; height: 18px; }
.p-minus { left: 173px; top: 163px; width: 63px; height: 12px; }
.p-tolerance { left: 335px; top: 231px; width: 62px; height: 12px; }
.p-steel { left: 151px; top: 267px; width: 95px; height: 16px; padding: 0 6px; }
.p-ipe { left: 151px; top: 285px; width: 62px; height: 12px; }
.p-hundred { left: 96px; top: 344px; width: 62px; height: 12px; }
.p-zero { left: 96px; top: 390px; width: 62px; height: 12px; }
.slider { background: linear-gradient(#f2f2f2, #cfcfcf); }
.slider label {
    width: 45px;
    background: linear-gradient(#a9a9b8, #85859a);
    border-right: 1px solid #444;
    text-align: center;
}
.track {
    display: flex;
    align-items: center;
    position: relative;
    flex: 1;
    padding: 0 2px;
}
.track input {
    width: 100%;
    height: 6px;
    appearance: none;
    background: linear-gradient(#bbb, #bbb) center / 100% 1px no-repeat;
}
.track input::-webkit-slider-thumb {
    appearance: none;
    width: 4px;
    height: 4px;
    border: 1px solid #111;
    border-radius: 50%;
    background: #fff;
}
.track output { position: absolute; left: 20px; background: #e2e2e2; line-height: 6px; }
.s-thickness { left: 132px; top: 89px; width: 110px; height: 11px; }
.s-angle { left: 48px; top: 320px; width: 111px; height: 11px; }
.s-angle output { left: 8px; }
.list { background: linear-gradient(#f4f4f4, #c8c8c8); }
.list label { padding: 0 3px 0 2px; border-right: 1px solid #bbb; }
.list select {
    flex: 1;
    appearance: none;
    border: 0;
    background: none;
    color: inherit;
    font: inherit;
    text-align: center;
    text-align-last: center;
}
.list::after {
    content: "";
    margin-right: 2px;
    border: 4px solid transparent;
    border-top: 6px solid #222;
    border-bottom: 0;
}
.l-stiffness { left: 132px; top: 102px; width: 124px; height: 13px; }
.l-units { left: 287px; top: 216px; width: 110px; height: 13px; }
.widgets {
    display: flex;
    align-items: center;
    gap: 2px;
    position: absolute;
    left: 1px;
    bottom: 1px;
    padding: 1px 3px 1px 1px;
    background: linear-gradient(to right, #ccc, #aaa 94%, #444);
    border: 1px solid #888;
}
.widgets svg { width: 14px; height: 14px; }
.widgets button { border: 1px solid transparent; }
.widgets .pressed { border-color: #555; background: #aaa; }
.widgets .active { border-color: #b07800; background: #ffc42c; }
.gh-status {
    display: flex;
    align-items: center;
    gap: 2px;
    height: 14px;
    padding: 0 3px;
    background: #f1f1f1;
    color: #111;
}
.gh-status svg { width: 10px; height: 10px; }

/* RFEM */
.rf {
    border-left: 1px solid #aaa;
    background: #cdd3de;
}
.rf-title {
    display: flex;
    align-items: center;
    gap: 3px;
    height: 19px;
    padding: 0 8px 0 5px;
    background: #fff;
    color: #777;
}
.rf-title .app { width: 11px; height: 11px; }
.rf-title span { flex: 1; }
.rf-title button { margin-left: 17px; }
.rf-title button svg { width: 8px; height: 8px; fill: none; stroke: #777; }
.menu-row {
    display: flex;
    align-items: center;
    gap: 10px;
    height: 16px;
    padding: 0 2px;
    color: #333;
}
.menu-row .grip { margin-right: -7px; }
.logo { width: 11px; height: 9px; margin-right: -6px; }
.mdi { width: 28px; height: 8px; margin-left: auto; }
.grip {
    flex: none;
    width: 2px;
    height: 12px;
    background: repeating-linear-gradient(#8d96a8 0 1px, transparent 1px 3px) left / 1px 100% no-repeat;
}
.rf-tools {
    display: flex;
    align-items: center;
    gap: 2px;
    height: 16px;
    padding: 0 2px;
    background: linear-gradient(#f3f6fb, #d0d7e4);
    overflow: hidden;
}
.rf-tools svg { width: 12px; height: 12px; }
.rf-tools .drop { border-width: 1px; margin: 0 3px 0 2px; }
.undo { color: #23508c; }
.redo { color: #a9b4c4; transform: scaleX(-1); }
.rule {
    flex: none;
    width: 1px;
    height: 10px;
    margin: 0 1px;
    background: #b3bbc9;
}
.cut {
    width: 3px;
    height: 10px;
    border: 1px solid #444;
    border-right: 0;
}
.start { margin-left: 4px; }
.push { margin-left: auto; }
.arc {
    width: 3px;
    height: 7px;
    border-left: 2px solid #3c68c8;
    border-radius: 50% 0 0 50%;
}
.view {
    flex: 1;
    min-height: 0;
    background: #fff;
    border-top: 1px solid #555;
    border-left: 1px solid #888;
}
.view svg { width: 100%; height: 100%; }
.view text { font-family: "Liberation Sans", sans-serif; font-size: 6px; }
.axis-x { fill: #e01010; }
.axis-z { fill: #1010e0; }
.rf-status {
    display: flex;
    align-items: center;
    gap: 1px;
    height: 14px;
    padding: 0 10px 0 5px;
    border-top: 2px solid #a0a4ac;
    background: linear-gradient(#c2c6cf, #a2a7b3);
    font-family: "Liberation Sans", sans-serif;
}
.rf-status button {
    padding: 0 1px;
    border: 1px solid #888d98;
    border-color: #666 #e4e6ea #e4e6ea #666;
}
.rf-status .on {
    margin-right: 2px;
    background: #c4c8d0;
    border-color: #eee #888 #888 #eee;
}
.rf-status span { margin-left: auto; }
```
